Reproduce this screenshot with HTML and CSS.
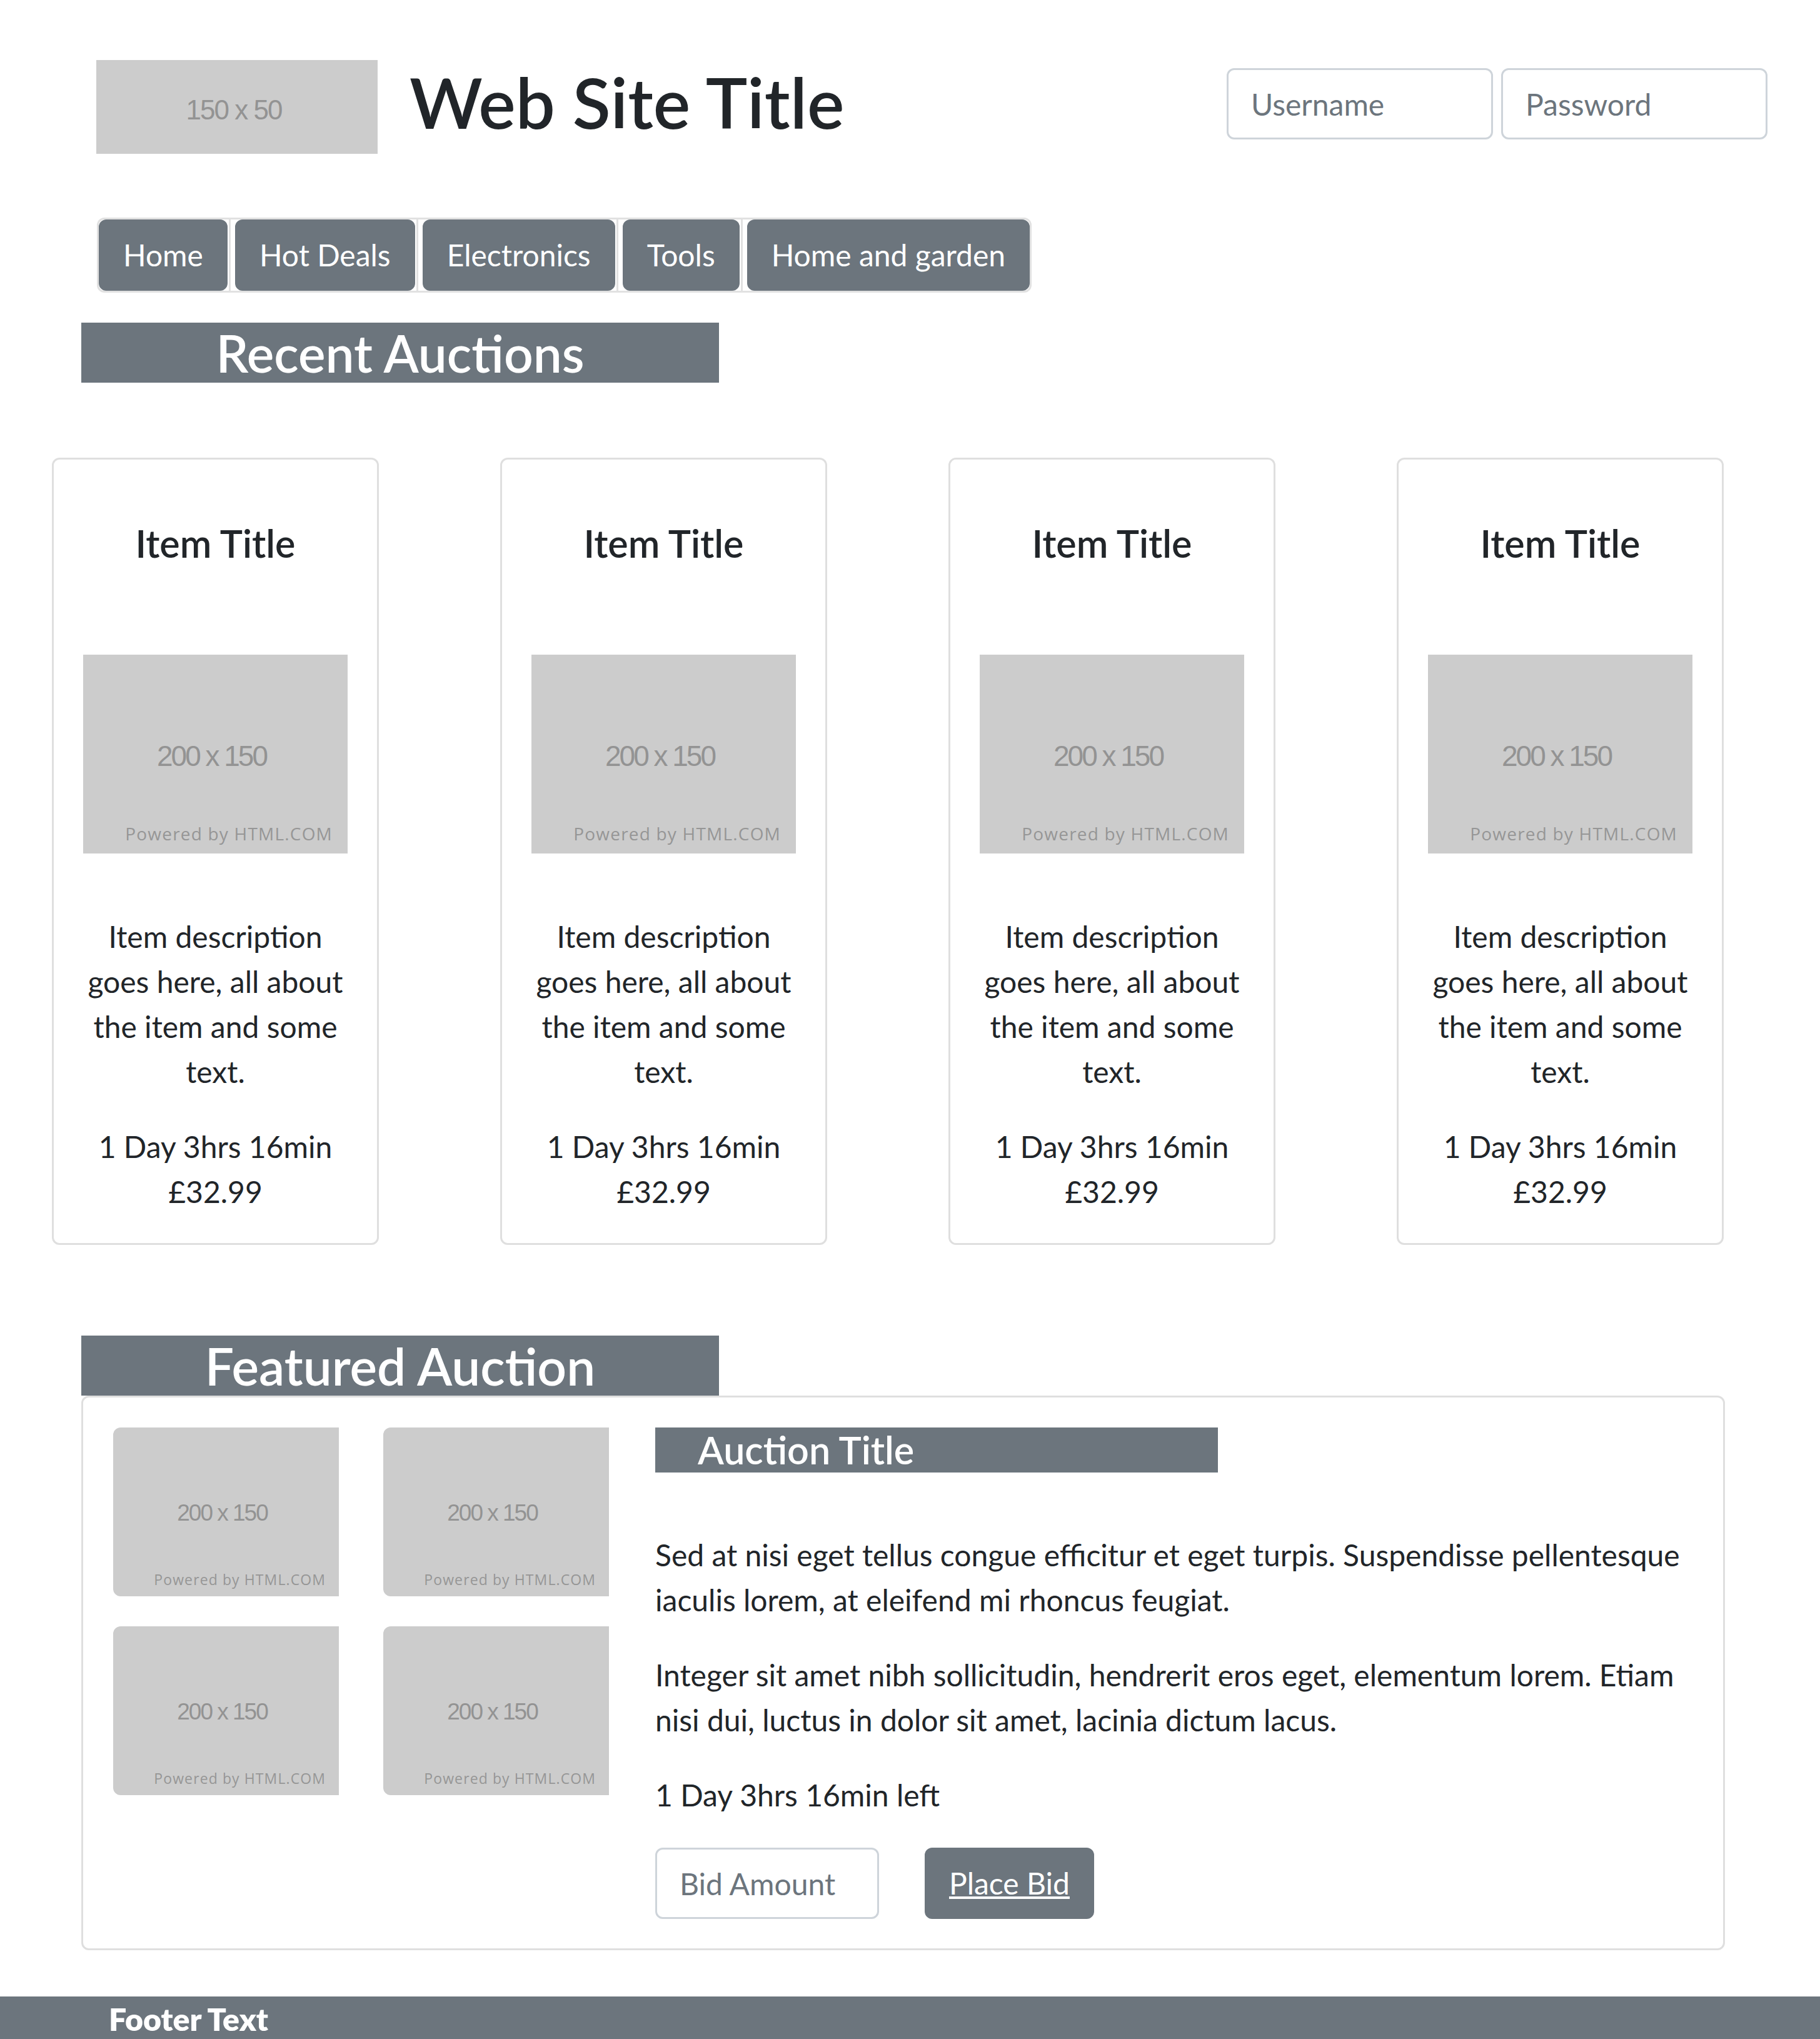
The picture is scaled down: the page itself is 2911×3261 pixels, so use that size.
FILE: index.html
```html
<!DOCTYPE html>
<html lang="en">
<head>
<meta charset="utf-8">
<title>Web Site Title</title>
<link rel="stylesheet" href="styles.css">
</head>
<body>
<header class="site-header">
  <div class="logo-ph"><span class="logo-label">150 x 50</span></div>
  <h1 class="site-title">Web Site Title</h1>
  <form class="login">
    <input class="field" type="text" placeholder="Username">
    <input class="field" type="password" placeholder="Password">
  </form>
</header>

<nav class="main-nav">
  <ul class="nav-list">
    <li><a class="nav-btn" href="#">Home</a></li>
    <li><a class="nav-btn" href="#">Hot Deals</a></li>
    <li><a class="nav-btn" href="#">Electronics</a></li>
    <li><a class="nav-btn" href="#">Tools</a></li>
    <li><a class="nav-btn" href="#">Home and garden</a></li>
  </ul>
</nav>

<section class="recent">
  <h2 class="band">Recent Auctions</h2>
  <div class="card-row">
    <article class="item-card">
      <h5 class="item-title">Item Title</h5>
      <div class="item-img"><span class="ph-size">200 x 150</span><span class="ph-credit">Powered by HTML.COM</span></div>
      <p class="item-desc">Item description<br>goes here, all about<br>the item and some<br>text.</p>
      <p class="item-meta">1 Day 3hrs 16min<br>£32.99</p>
    </article>
    <article class="item-card">
      <h5 class="item-title">Item Title</h5>
      <div class="item-img"><span class="ph-size">200 x 150</span><span class="ph-credit">Powered by HTML.COM</span></div>
      <p class="item-desc">Item description<br>goes here, all about<br>the item and some<br>text.</p>
      <p class="item-meta">1 Day 3hrs 16min<br>£32.99</p>
    </article>
    <article class="item-card">
      <h5 class="item-title">Item Title</h5>
      <div class="item-img"><span class="ph-size">200 x 150</span><span class="ph-credit">Powered by HTML.COM</span></div>
      <p class="item-desc">Item description<br>goes here, all about<br>the item and some<br>text.</p>
      <p class="item-meta">1 Day 3hrs 16min<br>£32.99</p>
    </article>
    <article class="item-card">
      <h5 class="item-title">Item Title</h5>
      <div class="item-img"><span class="ph-size">200 x 150</span><span class="ph-credit">Powered by HTML.COM</span></div>
      <p class="item-desc">Item description<br>goes here, all about<br>the item and some<br>text.</p>
      <p class="item-meta">1 Day 3hrs 16min<br>£32.99</p>
    </article>
  </div>
</section>

<section class="featured">
  <h2 class="band">Featured Auction</h2>
  <div class="feature-card">
    <div class="thumbs">
      <div class="thumb"><span class="th-size">200 x 150</span><span class="th-credit">Powered by HTML.COM</span></div>
      <div class="thumb"><span class="th-size">200 x 150</span><span class="th-credit">Powered by HTML.COM</span></div>
      <div class="thumb"><span class="th-size">200 x 150</span><span class="th-credit">Powered by HTML.COM</span></div>
      <div class="thumb"><span class="th-size">200 x 150</span><span class="th-credit">Powered by HTML.COM</span></div>
    </div>
    <div class="auction">
      <h3 class="auction-title">Auction Title</h3>
      <p class="auction-text">Sed at nisi eget tellus congue efficitur et eget turpis. Suspendisse pellentesque<br>iaculis lorem, at eleifend mi rhoncus feugiat.</p>
      <p class="auction-text">Integer sit amet nibh sollicitudin, hendrerit eros eget, elementum lorem. Etiam<br>nisi dui, luctus in dolor sit amet, lacinia dictum lacus.</p>
      <p class="auction-text">1 Day 3hrs 16min left</p>
      <form class="bid-row">
        <input class="field bid-input" type="text" placeholder="Bid Amount">
        <button class="bid-btn" type="button">Place Bid</button>
      </form>
    </div>
  </div>
</section>

<footer class="site-footer">
  <p class="footer-text">Footer Text</p>
</footer>
</body>
</html>
```
FILE: styles.css
```css
body {
  margin: 0;
  font-family: "Lato", "Segoe UI", sans-serif;
  font-size: 48px;
  line-height: 72px;
  color: #212529;
  background: #fff;
}

/* header */
.site-header {
  display: flex;
  align-items: flex-start;
  padding: 96px 84px 0 154px;
}
.logo-ph {
  flex: none;
  width: 450px;
  height: 150px;
  background: #cccccc;
  display: flex;
  justify-content: center;
}
.logo-label {
  margin: 58px 10px 0 0;
  font: 44px/1 "Liberation Sans", Arial, sans-serif;
  color: #939393;
  letter-spacing: -2px;
}
.site-title {
  margin: 1px 0 0 51px;
  font-size: 112px;
  line-height: 132px;
  font-weight: 600;
}
.login {
  margin: 13px 0 0 auto;
  display: flex;
  gap: 13px;
}
.field {
  box-sizing: border-box;
  width: 426px;
  height: 114px;
  padding: 18px 36px;
  border: 3px solid #ced4da;
  border-radius: 12px;
  font-family: inherit;
  font-size: 48px;
  line-height: 72px;
  color: #495057;
  background: #fff;
}
.field::placeholder {
  color: #6c757d;
  opacity: 1;
}

/* nav */
.main-nav {
  margin: 102px 0 0 155px;
}
.nav-list {
  display: inline-flex;
  list-style: none;
  margin: 0;
  padding: 0;
  border: 3px solid #e1e1e1;
  border-radius: 12px;
}
.nav-list li + li {
  margin-left: 2px;
  padding-left: 7px;
  border-left: 3px solid #e1e1e1;
}
.nav-btn {
  display: block;
  padding: 18px 36px;
  border: 3px solid #6c757d;
  border-radius: 12px;
  background: #6c757d;
  color: #fff;
  text-decoration: none;
}

/* section bands */
.band {
  box-sizing: border-box;
  width: 1020px;
  height: 96px;
  margin: 48px 0 0 130px;
  background: #6c757d;
  color: #fff;
  font-size: 82px;
  line-height: 96px;
  font-weight: 600;
  text-align: center;
}

/* recent cards */
.card-row {
  display: flex;
  gap: 194px;
  margin: 120px 0 0 83px;
}
.item-card {
  box-sizing: border-box;
  width: 523px;
  border: 3px solid #dfdfdf;
  border-radius: 12px;
  padding: 98px 10px 46px;
  text-align: center;
}
.item-title {
  margin: 0 0 142px;
  font-size: 61px;
  line-height: 72px;
  font-weight: 600;
}
.item-img {
  width: 423px;
  height: 318px;
  margin: 0 auto 97px;
  background: #cccccc;
  display: flex;
  flex-direction: column;
  align-items: center;
}
.ph-size {
  margin: 139px 12px 0 0;
  font: 46px/1 "Liberation Sans", Arial, sans-serif;
  letter-spacing: -3px;
  color: #939393;
}
.ph-credit {
  margin: auto 24px 18px 0;
  align-self: flex-end;
  font: 28px/1 "Open Sans", sans-serif;
  letter-spacing: 1.2px;
  color: #969696;
}
.item-desc {
  margin: 0 0 48px;
}
.item-meta {
  margin: 0;
}

/* featured */
.featured {
  margin-top: 145px;
}
.featured .band {
  margin-top: 0;
}
.feature-card {
  box-sizing: border-box;
  display: flex;
  width: 2629px;
  margin-left: 130px;
  padding: 48px 48px 47px;
  border: 3px solid #dfdfdf;
  border-radius: 12px;
}
.thumbs {
  flex: none;
  display: grid;
  grid-template-columns: 361px 361px;
  column-gap: 71px;
  row-gap: 48px;
  align-content: start;
}
.thumb {
  height: 270px;
  background: #cccccc;
  border-radius: 12px 0 0 12px;
  display: flex;
  flex-direction: column;
  align-items: center;
}
.th-size {
  margin: 118px 12px 0 0;
  font: 37px/1 "Liberation Sans", Arial, sans-serif;
  letter-spacing: -2px;
  color: #939393;
}
.th-credit {
  margin: auto 21px 15px 0;
  align-self: flex-end;
  font: 23px/1 "Open Sans", sans-serif;
  letter-spacing: 1.1px;
  color: #969696;
}
.auction {
  flex: 1;
  margin-left: 74px;
}
.auction-title {
  box-sizing: border-box;
  width: 900px;
  height: 72px;
  margin: 0 0 96px;
  padding-left: 68px;
  background: #6c757d;
  color: #fff;
  font-size: 61px;
  line-height: 72px;
  font-weight: 600;
}
.auction-text {
  margin: 0 0 48px;
}
.bid-row {
  display: flex;
  gap: 73px;
}
.bid-input {
  width: 358px;
}
.bid-btn {
  box-sizing: border-box;
  height: 114px;
  padding: 18px 36px;
  border: 3px solid #6c757d;
  border-radius: 12px;
  background: #6c757d;
  color: #fff;
  font-family: inherit;
  font-size: 48px;
  line-height: 72px;
  text-decoration: underline;
}

/* footer */
.site-footer {
  margin-top: 74px;
  padding: 0 0 120px 174px;
  background: #6c757d;
  color: #fff;
}
.footer-text {
  margin: 0;
  font-size: 50px;
  font-weight: 800;
}
```
